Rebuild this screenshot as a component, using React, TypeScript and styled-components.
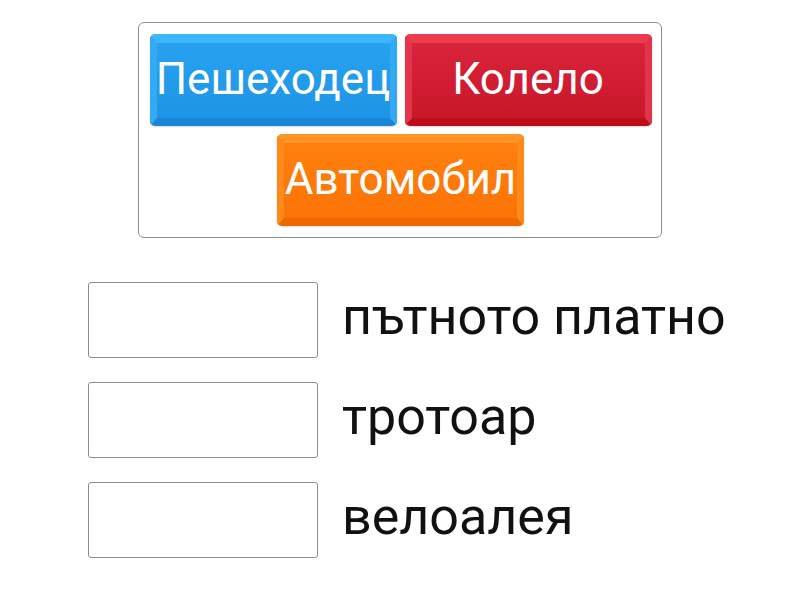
import React from "react";
import styled, { createGlobalStyle } from "styled-components";

const Global = createGlobalStyle`
  html, body { margin: 0; padding: 0; background: #fff; }
  body { font-family: Roboto, "Noto Sans", sans-serif; }
`;

const Page = styled.div`
  width: 800px;
  height: 600px;
  display: flex;
  flex-direction: column;
  align-items: center;
  padding-top: 22px;
  box-sizing: border-box;
`;

const Tray = styled.div`
  width: 524px;
  height: 216px;
  box-sizing: border-box;
  border: 1px solid #8f8f8f;
  border-radius: 6px;
  padding: 11px 9px 10px 10px;
  display: flex;
  flex-wrap: wrap;
  justify-content: center;
  align-content: flex-start;
  column-gap: 8px;
  row-gap: 8px;
`;

type Tone = { top: string; side: string; bottom: string; face1: string; face2: string };

const tones: Record<string, Tone> = {
  blue: { top: "#3cb6fc", side: "#33aaf3", bottom: "#1a86d8", face1: "#27a2f0", face2: "#1f94e6" },
  red: { top: "#ee3b4e", side: "#e2344a", bottom: "#bd0c1c", face1: "#d8243a", face2: "#c9172a" },
  orange: { top: "#ff9424", side: "#ff8a1a", bottom: "#ee6800", face1: "#ff800f", face2: "#fb7405" },
};

const Tile = styled.div<{ $tone: Tone }>`
  width: 247px;
  height: 92px;
  box-sizing: border-box;
  border-style: solid;
  border-width: 9px 7px 8px 7px;
  border-color: ${(p) => `${p.$tone.top} ${p.$tone.side} ${p.$tone.bottom} ${p.$tone.side}`};
  border-radius: 5px;
  background: linear-gradient(${(p) => p.$tone.face1}, ${(p) => p.$tone.face2});
  color: #fff;
  font-family: Roboto, sans-serif;
  font-size: 44px;
  line-height: 1;
  padding-bottom: 4px;
  display: flex;
  align-items: center;
  justify-content: center;
  white-space: nowrap;
  overflow: visible;
  box-shadow: 0 1px 2px rgba(0, 0, 0, 0.15);
`;

const List = styled.div`
  margin-top: 44px;
  width: 640px;
  padding-left: 8px;
  box-sizing: border-box;
  display: flex;
  flex-direction: column;
  gap: 24px;
`;

const Row = styled.div`
  display: flex;
  align-items: center;
  gap: 24px;
`;

const Slot = styled.div`
  width: 230px;
  height: 76px;
  box-sizing: border-box;
  border: 1px solid #8c8c8c;
  border-radius: 3px;
  background: #fff;
  flex: none;
`;

const Label = styled.div`
  font-family: Roboto, sans-serif;
  font-size: 52px;
  line-height: 1;
  color: #111;
  white-space: nowrap;
  margin-top: -6px;
`;

export default function App() {
  return (
    <>
      <Global />
      <Page>
        <Tray>
          <Tile $tone={tones.blue}>Пешеходец</Tile>
          <Tile $tone={tones.red}>Колело</Tile>
          <Tile $tone={tones.orange}>Автомобил</Tile>
        </Tray>
        <List>
          {["пътното платно", "тротоар", "велоалея"].map((t) => (
            <Row key={t}>
              <Slot />
              <Label>{t}</Label>
            </Row>
          ))}
        </List>
      </Page>
    </>
  );
}
